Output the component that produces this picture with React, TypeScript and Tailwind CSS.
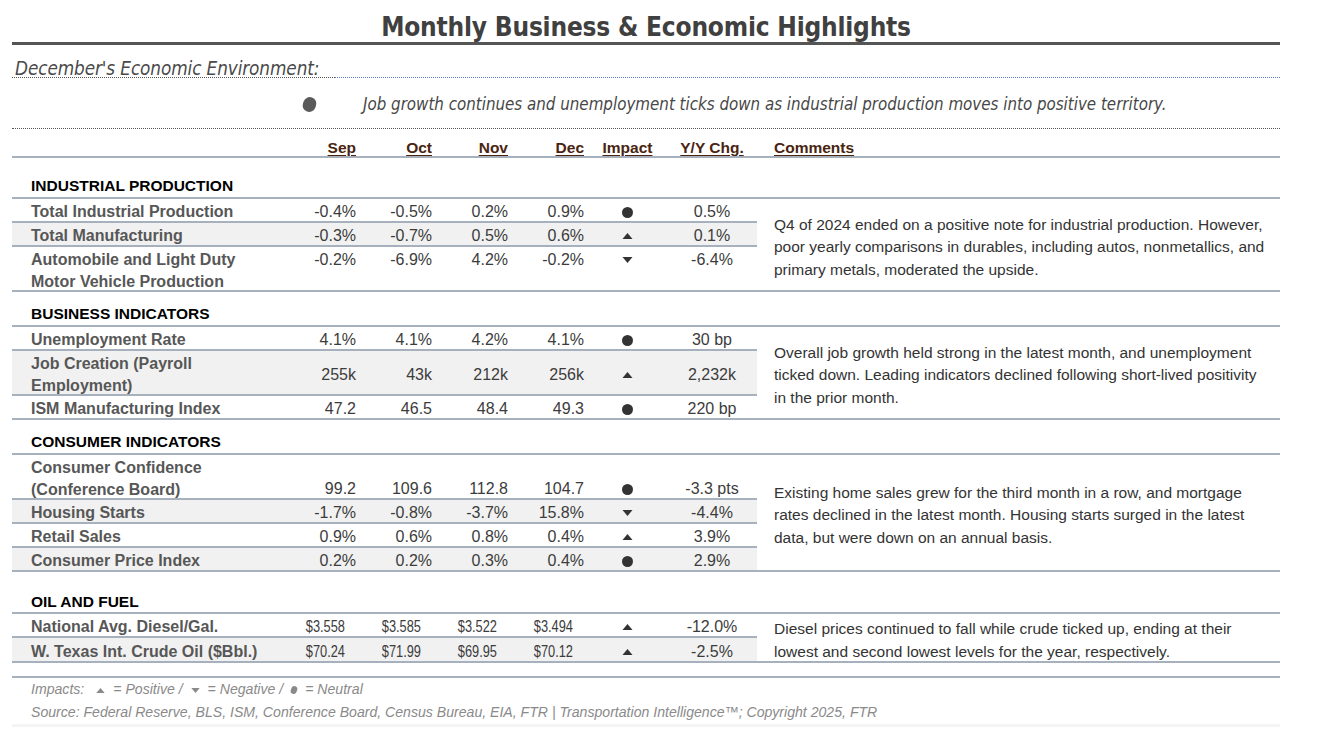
import React from "react";

type Impact = "up" | "down" | "dot";

type Row = {
  label: string[];
  vals: string[];
  impact: Impact;
  yoy: string;
  shade?: boolean;
  align?: "start" | "center" | "end";
};

type Section = {
  title: string;
  titleH: string;
  narrow?: boolean;
  rows: Row[];
  comment: string[];
};

const sections: Section[] = [
  {
    title: "INDUSTRIAL PRODUCTION",
    titleH: "h-[41px]",
    rows: [
      { label: ["Total Industrial Production"], vals: ["-0.4%", "-0.5%", "0.2%", "0.9%"], impact: "dot", yoy: "0.5%" },
      { label: ["Total Manufacturing"], vals: ["-0.3%", "-0.7%", "0.5%", "0.6%"], impact: "up", yoy: "0.1%", shade: true },
      {
        label: ["Automobile and Light Duty", "Motor Vehicle Production"],
        vals: ["-0.2%", "-6.9%", "4.2%", "-0.2%"],
        impact: "down",
        yoy: "-6.4%",
        align: "start",
      },
    ],
    comment: [
      "Q4 of 2024 ended on a positive note for industrial production. However,",
      "poor yearly comparisons in durables, including autos, nonmetallics, and",
      "primary metals, moderated the upside.",
    ],
  },
  {
    title: "BUSINESS INDICATORS",
    titleH: "h-[35px]",
    rows: [
      { label: ["Unemployment Rate"], vals: ["4.1%", "4.1%", "4.2%", "4.1%"], impact: "dot", yoy: "30 bp" },
      {
        label: ["Job Creation (Payroll", "Employment)"],
        vals: ["255k", "43k", "212k", "256k"],
        impact: "up",
        yoy: "2,232k",
        shade: true,
        align: "center",
      },
      { label: ["ISM Manufacturing Index"], vals: ["47.2", "46.5", "48.4", "49.3"], impact: "dot", yoy: "220 bp" },
    ],
    comment: [
      "Overall job growth held strong in the latest month, and unemployment",
      "ticked down. Leading indicators declined following short-lived positivity",
      "in the prior month.",
    ],
  },
  {
    title: "CONSUMER INDICATORS",
    titleH: "h-[35px]",
    rows: [
      {
        label: ["Consumer Confidence", "(Conference Board)"],
        vals: ["99.2", "109.6", "112.8", "104.7"],
        impact: "dot",
        yoy: "-3.3 pts",
        align: "end",
      },
      { label: ["Housing Starts"], vals: ["-1.7%", "-0.8%", "-3.7%", "15.8%"], impact: "down", yoy: "-4.4%", shade: true },
      { label: ["Retail Sales"], vals: ["0.9%", "0.6%", "0.8%", "0.4%"], impact: "up", yoy: "3.9%" },
      { label: ["Consumer Price Index"], vals: ["0.2%", "0.2%", "0.3%", "0.4%"], impact: "dot", yoy: "2.9%", shade: true },
    ],
    comment: [
      "Existing home sales grew for the third month in a row, and mortgage",
      "rates declined in the latest month. Housing starts surged in the latest",
      "data, but were down on an annual basis.",
    ],
  },
  {
    title: "OIL AND FUEL",
    titleH: "h-[42px]",
    narrow: true,
    rows: [
      { label: ["National Avg. Diesel/Gal."], vals: ["$3.558", "$3.585", "$3.522", "$3.494"], impact: "up", yoy: "-12.0%" },
      {
        label: ["W. Texas Int. Crude Oil ($Bbl.)"],
        vals: ["$70.24", "$71.99", "$69.95", "$70.12"],
        impact: "up",
        yoy: "-2.5%",
        shade: true,
      },
    ],
    comment: [
      "Diesel prices continued to fall while crude ticked up, ending at their",
      "lowest and second lowest levels for the year, respectively.",
    ],
  },
];

function ImpactIcon({ kind, small }: { kind: Impact; small?: boolean }) {
  const color = small ? "#8a8a8a" : "#333333";
  if (kind === "dot") {
    return small ? (
      <span className="inline-block w-[6px] h-[8px] rounded-full bg-[#8a8a8a] rotate-[20deg]" />
    ) : (
      <span className="inline-block w-[11px] h-[11px] rounded-full bg-[#333]" />
    );
  }
  const w = small ? 9 : 11;
  const h = small ? 5 : 6;
  return (
    <svg width={w} height={h} viewBox="0 0 10 6">
      {kind === "up" ? (
        <polygon points="5,0 10,6 0,6" fill={color} />
      ) : (
        <polygon points="0,0 10,0 5,6" fill={color} />
      )}
    </svg>
  );
}

function DataRow({ row, last, narrow }: { row: Row; last: boolean; narrow?: boolean }) {
  const multi = row.label.length > 1;
  const h = multi
    ? last
      ? "h-[43px]"
      : "h-[45px]"
    : last
    ? narrow
      ? "h-[23px]"
      : "h-[22px]"
    : "h-[24px]";
  const align =
    row.align === "start" ? "items-start" : row.align === "end" ? "items-end" : "items-center";
  return (
    <div
      className={`flex ${h} ${last ? "" : "border-b-2 border-[#a7b1bd]"} ${
        row.shade ? "bg-[#f1f1f1]" : ""
      }`}
    >
      <div className="w-[272px] pl-[19px] font-bold text-[#575757] leading-[22px] flex flex-col justify-center translate-y-[2px]">
        {row.label.map((l) => (
          <span key={l} className="whitespace-nowrap">
            {l}
          </span>
        ))}
      </div>
      <div className={`flex ${align} text-[#3c3c3c] leading-[22px] translate-y-[2px]`}>
        {row.vals.map((v, i) => (
          <div key={i} className={`w-[76px] text-right ${narrow ? "pr-[15px]" : "pr-[4px]"}`}>
            {narrow ? (
              <span className="inline-block origin-right scale-x-[0.8]">{v}</span>
            ) : (
              v
            )}
          </div>
        ))}
        <div className="w-[79px] h-[22px] flex items-center justify-center">
          <ImpactIcon kind={row.impact} />
        </div>
        <div className="w-[90px] text-center">{row.yoy}</div>
      </div>
    </div>
  );
}

function SectionBlock({ s }: { s: Section }) {
  return (
    <div className="border-b-2 border-[#a7b1bd] font-['Liberation_Sans',Arial,sans-serif]">
      <div
        className={`${s.titleH} flex items-end ${
          s.narrow ? "pb-[2px]" : "pb-[3px]"
        } pl-[19px] border-b-2 border-[#a7b1bd] font-bold text-black leading-[16px]`}
      >
        {s.title}
      </div>
      <div className="flex">
        <div className="w-[745px] text-[16px]">
          {s.rows.map((r, i) => (
            <DataRow key={i} row={r} last={i === s.rows.length - 1} narrow={s.narrow} />
          ))}
        </div>
        <div className="flex-1 flex items-center pl-[17px] text-[#333] leading-[22.3px]">
          <p className="translate-y-[2.5px]">
            {s.comment.map((c, i) => (
              <React.Fragment key={i}>
                {c}
                {i < s.comment.length - 1 && <br />}
              </React.Fragment>
            ))}
          </p>
        </div>
      </div>
    </div>
  );
}

export default function App() {
  const headers = ["Sep", "Oct", "Nov", "Dec"];
  return (
    <div className="w-[1319px] h-[739px] bg-white overflow-hidden">
      <div className="ml-[12px] w-[1268px] text-[15.5px]">
        {/* title */}
        <div className="h-[42px] flex items-end justify-center pb-[2px]">
          <h1 className="font-['DejaVu_Sans_Condensed','DejaVu_Sans',sans-serif] font-bold text-[26px] leading-none text-[#404040] tracking-[-0.2px]">
            Monthly Business &amp; Economic Highlights
          </h1>
        </div>
        <div className="h-[3px] bg-[#555]" />

        {/* environment */}
        <div className="flex h-[33px]">
          <div className="w-[323px] border-b border-dotted border-[#555] flex items-end pl-[3px] pb-[1px]">
            <span className="font-['DejaVu_Sans_Condensed','DejaVu_Sans',sans-serif] italic text-[18.8px] leading-none text-[#4a4a4a] whitespace-nowrap tracking-[-0.1px] translate-y-[3px]">
              December's Economic Environment:
            </span>
          </div>
          <div className="flex-1 border-b border-dotted border-[#5c80c8]" />
        </div>
        <div className="h-[51px] flex items-center pt-[3px] border-b border-dotted border-[#555]">
          <span className="ml-[291px] inline-block w-[13px] h-[15px] rounded-full bg-[#5a5a5a] rotate-[20deg]" />
          <span className="ml-[47px] font-['DejaVu_Sans_Condensed','DejaVu_Sans',sans-serif] italic text-[16.8px] text-[#474747] whitespace-nowrap">
            Job growth continues and unemployment ticks down as industrial production moves into positive territory.
          </span>
        </div>

        {/* column headers */}
        <div className="h-[29px] flex items-end border-b-2 border-[#a7b1bd] font-['Liberation_Sans',Arial,sans-serif] font-bold text-[#4a2410] leading-[16px]">
          <div className="w-[272px]" />
          {headers.map((h) => (
            <div key={h} className="w-[76px] text-right pr-[4px]">
              <span className="underline underline-offset-[2px]">{h}</span>
            </div>
          ))}
          <div className="w-[79px] text-center">
            <span className="underline underline-offset-[2px]">Impact</span>
          </div>
          <div className="w-[90px] text-center">
            <span className="underline underline-offset-[2px]">Y/Y Chg.</span>
          </div>
          <div className="pl-[17px]">
            <span className="underline underline-offset-[2px]">Comments</span>
          </div>
        </div>

        {sections.map((s) => (
          <SectionBlock key={s.title} s={s} />
        ))}

        <div className="h-[15px] border-b-2 border-[#a7b1bd]" />

        {/* footer */}
        <div className="font-['Liberation_Sans',Arial,sans-serif] italic text-[14.1px] text-[#8a8a8a] border-b-[3px] border-[#f4f4f4]">
          <div className="h-[24px] flex items-center gap-[8px] pl-[19px]">
            <span>Impacts:</span>
            <span className="ml-[4px] inline-flex items-center">
              <ImpactIcon kind="up" small />
            </span>
            <span>= Positive /</span>
            <span className="inline-flex items-center">
              <ImpactIcon kind="down" small />
            </span>
            <span>= Negative /</span>
            <span className="inline-flex items-center">
              <ImpactIcon kind="dot" small />
            </span>
            <span>= Neutral</span>
          </div>
          <div className="h-[22px] flex items-center pl-[19px]">
            Source: Federal Reserve, BLS, ISM, Conference Board, Census Bureau, EIA, FTR | Transportation
            Intelligence™; Copyright 2025, FTR
          </div>
        </div>
      </div>
    </div>
  );
}
